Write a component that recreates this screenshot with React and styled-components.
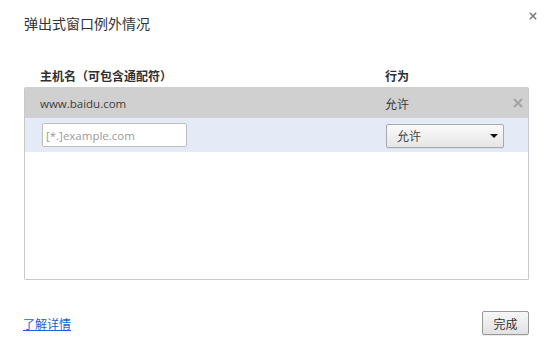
import React from 'react';
import styled, { createGlobalStyle } from 'styled-components';

const GlobalStyle = createGlobalStyle`
  html, body {
    margin: 0;
    padding: 0;
    background: #fff;
  }
  body {
    font-family: "Open Sans", "Noto Sans CJK SC", sans-serif;
    color: #333;
  }
`

const rows = [{ host: 'www.baidu.com', action: '允许' }]

function CrossIcon({ size, color }) {
  return (
    <svg width={size} height={size} viewBox="0 0 10 10">
      <path d="M1 1 L9 9 M9 1 L1 9" stroke={color} strokeWidth="2" strokeLinecap="butt" />
    </svg>
  )
}

function App() {
  return (
    <>
      <GlobalStyle />
      <Dialog>
        <TitleRow>
          <Title>弹出式窗口例外情况</Title>
          <CloseButton>
            <CrossIcon size={8} color="#7a7a7a" />
          </CloseButton>
        </TitleRow>

        <HeaderRow>
          <HostCol>主机名（可包含通配符）</HostCol>
          <ActionCol>行为</ActionCol>
        </HeaderRow>

        <Table>
          {rows.map((r) => (
            <Row key={r.host} variant="existing">
              <HostCol>
                <HostText>{r.host}</HostText>
              </HostCol>
              <ActionCol>{r.action}</ActionCol>
              <RemoveButton>
                <CrossIcon size={10} color="#a3a3a3" />
              </RemoveButton>
            </Row>
          ))}
          <Row variant="new">
            <HostCell>
              <HostInput placeholder="[*.]example.com" />
            </HostCell>
            <ActionCell>
              <SelectBox>
                <span>允许</span>
                <svg width="8" height="4" viewBox="0 0 8 4">
                  <path d="M0 0 L8 0 L4 4 Z" fill="#111" />
                </svg>
              </SelectBox>
            </ActionCell>
          </Row>
        </Table>

        <Footer>
          <Link href="#">了解详情</Link>
          <DoneButton>完成</DoneButton>
        </Footer>
      </Dialog>
    </>
  );
}

export default App;

const Dialog = styled.div`
  width: 546px;
  height: 350px;
  box-sizing: border-box;
  padding: 0 17px 15px 24px;
  display: flex;
  flex-direction: column;
`

const TitleRow = styled.div`
  height: 64px;
  display: flex;
  justify-content: space-between;
  align-items: flex-start;
`

const Title = styled.h1`
  margin: 13px 0 0 0;
  font-size: 14px;
  line-height: 20px;
  font-weight: normal;
  color: #333;
  font-family: "Noto Sans CJK SC", sans-serif;
`

const CloseButton = styled.div`
  margin: 12px -8px 0 0;
  width: 8px;
  height: 8px;
  display: flex;
  cursor: pointer;
`

const HeaderRow = styled.div`
  height: 23px;
  display: flex;
  align-items: center;
  padding-left: 16px;
  font-size: 12px;
  font-weight: bold;
  color: #303030;
  font-family: "Noto Sans CJK SC", sans-serif;
`

const HostCol = styled.div`
  width: 345px;
`

const HostText = styled.span`
  font-size: 11.5px;
  font-family: "Open Sans", sans-serif;
`

const ActionCol = styled.div`
  flex: 1;
  font-family: "Noto Sans CJK SC", sans-serif;
`

const Table = styled.div`
  height: 193px;
  box-sizing: border-box;
  border: 1px solid #c8c8c8;
  border-top-color: #d0d0d0;
  border-radius: 2px;
  overflow: hidden;
`

const Row = styled.div`
  display: flex;
  align-items: center;
  box-sizing: border-box;
  height: ${(p) => (p.variant === 'existing' ? '30px' : '34px')};
  padding-left: 15px;
  background: ${(p) => (p.variant === 'existing' ? '#d0d0d0' : '#e4ebf6')};
  font-size: 12px;
  color: #3c3c3c;
`

const RemoveButton = styled.div`
  width: 10px;
  height: 10px;
  display: flex;
  margin-right: 5px;
  cursor: pointer;
`

const HostCell = styled.div`
  width: 344px;
  padding-left: 2px;
  display: flex;
`

const ActionCell = styled.div`
  flex: 1;
  display: flex;
  padding-top: 1px;
`

const HostInput = styled.input`
  width: 145px;
  height: 24px;
  box-sizing: border-box;
  border: 1px solid #bfbfbf;
  border-radius: 2px;
  padding: 0 3px;
  font-size: 11.5px;
  font-family: "Open Sans", "Noto Sans CJK SC", sans-serif;
  color: #333;
  background: #fff;
  outline: none;

  &::placeholder {
    color: #9a9a9a;
  }
`

const SelectBox = styled.div`
  width: 118px;
  height: 24px;
  box-sizing: border-box;
  border: 1px solid #aaa;
  border-radius: 2px;
  background: linear-gradient(#fafafa, #e6e6e6);
  box-shadow: 0 1px 0 rgba(0, 0, 0, 0.06);
  display: flex;
  align-items: center;
  justify-content: space-between;
  padding: 0 5px 0 10px;
  font-size: 12px;
  color: #444;
  font-family: "Noto Sans CJK SC", sans-serif;
`

const Footer = styled.div`
  margin-top: auto;
  display: flex;
  justify-content: space-between;
  align-items: center;
`

const Link = styled.a`
  font-size: 12px;
  color: #1a5fd6;
  text-decoration: underline;
  font-family: "Noto Sans CJK SC", sans-serif;
  margin-left: -1px;
`

const DoneButton = styled.button`
  width: 47px;
  height: 24px;
  box-sizing: border-box;
  border: 1px solid #999;
  border-radius: 2px;
  background: linear-gradient(#f7f7f7, #e2e2e2);
  box-shadow: 0 1px 0 rgba(0, 0, 0, 0.08);
  font-size: 12px;
  color: #333;
  font-family: "Noto Sans CJK SC", sans-serif;
  padding: 0;
  cursor: pointer;
`
